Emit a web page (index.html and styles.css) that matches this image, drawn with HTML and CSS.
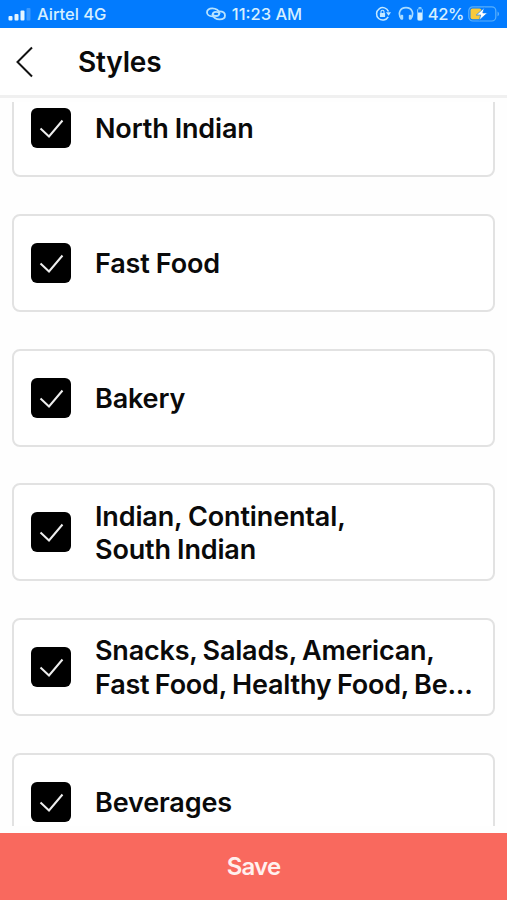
FILE: index.html
```html
<!DOCTYPE html>
<html lang="en">
<head>
  <meta charset="UTF-8">
  <meta name="viewport" content="width=device-width, initial-scale=1">
  <title>Styles</title>
  <link rel="stylesheet" href="styles.css">
</head>
<body>

  <!-- STATUS BAR -->
  <div class="status-bar">
    <div class="status-left">
      <svg class="signal" width="24" height="14" viewBox="0 0 24 14" fill="#e4f5ff">
        <rect x="0.5" y="9" width="4" height="4.5" rx="1"/>
        <rect x="6.5" y="7" width="4" height="6.5" rx="1"/>
        <rect x="12.5" y="3.5" width="4" height="10" rx="1"/>
        <rect x="18.5" y="1" width="4" height="12.5" rx="1" opacity="0.25"/>
      </svg>
      <span class="carrier">Airtel 4G</span>
    </div>
    <div class="status-center">
      <svg width="20" height="14" viewBox="0 0 20 14" fill="none" stroke="#b8e3ff" stroke-width="1.8" stroke-linecap="round">
        <path d="M6.5 9.3C3 9.3 1 7.6 1 5.2S3 1.4 6.3 1.4c3.7 0 7 2.3 7 4.8 0 1.8-1.5 2.8-3.3 2.8-1.5 0-2.7-.5-3.5-1.5"/>
        <path d="M13.5 4.4c3.5 0 5.5 1.7 5.5 4.1s-2 3.9-5.3 3.9c-3.7 0-7-2.3-7-4.8C6.7 5.8 8.2 4.8 10 4.8c1.5 0 2.7.5 3.5 1.5"/>
      </svg>
      <span class="time">11:23 AM</span>
    </div>
    <div class="status-right">
      <svg width="16" height="16" viewBox="0 0 16 16" fill="none" stroke="#c4e8ff" stroke-width="1.5">
        <path d="M13.2 10.8A6.2 6.2 0 1 1 13.5 5.5"/>
        <path d="M11 6.3h5l-2.4 3.4z" fill="#c4e8ff" stroke="none"/>
        <rect x="4.9" y="7" width="5.2" height="4" rx="0.6" fill="#c4e8ff" stroke="none"/>
        <path d="M6 7V5.7a1.5 1.5 0 0 1 3 0V7" stroke-width="1.1"/>
      </svg>
      <svg class="headphones" width="16" height="16" viewBox="0 0 16 16" fill="none" stroke="#a9dcff" stroke-width="1.7">
        <path d="M3.5 13C-.8 7.5 2 1.6 8 1.6S16.8 7.5 12.5 13"/>
        <rect x="2.6" y="8.8" width="2.6" height="5" rx="1" fill="#a9dcff" stroke="none"/>
        <rect x="10.8" y="8.8" width="2.6" height="5" rx="1" fill="#a9dcff" stroke="none"/>
      </svg>
      <svg class="device-battery" width="6" height="14" viewBox="0 0 6 14">
        <rect x="1.6" y="0" width="2.8" height="1.5" fill="#8ccfff"/>
        <rect x="0.6" y="1.8" width="4.8" height="11.6" rx="1" fill="none" stroke="#8ccfff"/>
        <rect x="1" y="5.5" width="4" height="7.5" fill="#d5efff"/>
      </svg>
      <span class="percent">42%</span>
      <svg class="battery" width="32" height="16" viewBox="0 0 32 16">
        <rect x="0.8" y="0.8" width="27" height="14.2" rx="4" fill="none" stroke="#5ab0fb" stroke-width="1.2"/>
        <path d="M29.5 5.5c2 .8 2 4 0 4.8z" fill="#5ab0fb"/>
        <rect x="2.5" y="2.6" width="11" height="10.6" rx="2" fill="#f8c93c"/>
        <path d="M16.3 1.8 8.3 9h4.4l-1.5 5.3 8.2-7.4h-4.6z" fill="#fff" stroke="#0a7cf8" stroke-width="0.7"/>
      </svg>
    </div>
  </div>

  <!-- HEADER -->
  <header class="header">
    <svg class="back" width="18" height="32" viewBox="0 0 18 32" fill="none" stroke="#111" stroke-width="2">
      <path d="M16 1.5 1.5 16 16 30.5"/>
    </svg>
    <h1 class="title">Styles</h1>
  </header>

  <!-- LIST -->
  <main class="list">
    <div class="card">
      <span class="checkbox"><svg viewBox="0 0 40 40"><path d="M9.5 20.5 18 28.5 31.5 12.5"/></svg></span>
      <span class="label">North Indian</span>
    </div>
    <div class="card">
      <span class="checkbox"><svg viewBox="0 0 40 40"><path d="M9.5 20.5 18 28.5 31.5 12.5"/></svg></span>
      <span class="label">Fast Food</span>
    </div>
    <div class="card">
      <span class="checkbox"><svg viewBox="0 0 40 40"><path d="M9.5 20.5 18 28.5 31.5 12.5"/></svg></span>
      <span class="label">Bakery</span>
    </div>
    <div class="card">
      <span class="checkbox"><svg viewBox="0 0 40 40"><path d="M9.5 20.5 18 28.5 31.5 12.5"/></svg></span>
      <span class="label">Indian, Continental,<br>South Indian</span>
    </div>
    <div class="card">
      <span class="checkbox"><svg viewBox="0 0 40 40"><path d="M9.5 20.5 18 28.5 31.5 12.5"/></svg></span>
      <span class="label label-long">Snacks, Salads, American,<br>Fast Food, Healthy Food, Be...</span>
    </div>
    <div class="card">
      <span class="checkbox"><svg viewBox="0 0 40 40"><path d="M9.5 20.5 18 28.5 31.5 12.5"/></svg></span>
      <span class="label">Beverages</span>
    </div>
  </main>

  <button class="btn-save">Save</button>

</body>
</html>
```
FILE: styles.css
```css
* {
  box-sizing: border-box;
}

body {
  margin: 0;
  height: 900px;
  display: flex;
  flex-direction: column;
  overflow: hidden;
  background: #fefefe;
  color: #0a0a0a;
  font-family: Inter, "Liberation Sans", sans-serif;
}

svg {
  display: block;
  flex: none;
}

/* Status bar */
.status-bar {
  flex: none;
  height: 28px;
  display: grid;
  grid-template-columns: 1fr auto 1fr;
  align-items: center;
  padding: 0 7px 0 8px;
  background: #027bfe;
  color: #d5efff;
  font-size: 16.5px;
  font-weight: 500;
  line-height: 28px;
  white-space: nowrap;
}

.status-left,
.status-center,
.status-right {
  display: flex;
  align-items: center;
}

.carrier {
  margin-left: 5px;
}

.time {
  margin-left: 6px;
}

.status-right {
  justify-content: flex-end;
}

.headphones {
  margin-left: 7px;
}

.device-battery {
  margin-left: 3px;
}

.percent {
  margin-left: 5px;
  letter-spacing: -0.4px;
}

.battery {
  margin-left: 4px;
}

/* Header */
.header {
  flex: none;
  height: 70px;
  display: flex;
  align-items: center;
  padding-left: 16px;
  border-bottom: 3px solid #f0f0f0;
  background: #fff;
}

.title {
  margin: 0 0 0 44px;
  padding-top: 1px;
  font-size: 28px;
  font-weight: 600;
  line-height: 36px;
  letter-spacing: -0.2px;
}

/* List */
.list {
  flex: 1;
  min-height: 0;
  margin: 4px 0 7px;
  padding: 0 12px;
  overflow: hidden;
}

.card {
  height: 98px;
  display: flex;
  align-items: center;
  margin-bottom: 36.8px;
  padding: 0 17px;
  border: 2px solid #e2e2e2;
  border-radius: 8px;
  background: #fff;
}

.card:first-child {
  margin-top: -23px;
}

.checkbox {
  flex: none;
  width: 40px;
  height: 40px;
  border-radius: 6px;
  background: #000;
}

.checkbox path {
  fill: none;
  stroke: #eee;
  stroke-width: 2;
}

.label {
  margin-left: 24px;
  padding-top: 2px;
  font-size: 27px;
  font-weight: 600;
  line-height: 33.7px;
  letter-spacing: -0.15px;
  word-spacing: -0.5px;
  white-space: nowrap;
}

.label-long {
  letter-spacing: -0.2px;
  word-spacing: -1.2px;
}

/* Save */
.btn-save {
  flex: none;
  height: 67px;
  padding: 0;
  border: none;
  background: #f9695e;
  color: #fff0ee;
  font-family: inherit;
  font-size: 24px;
  font-weight: 600;
  letter-spacing: -0.8px;
}
```
